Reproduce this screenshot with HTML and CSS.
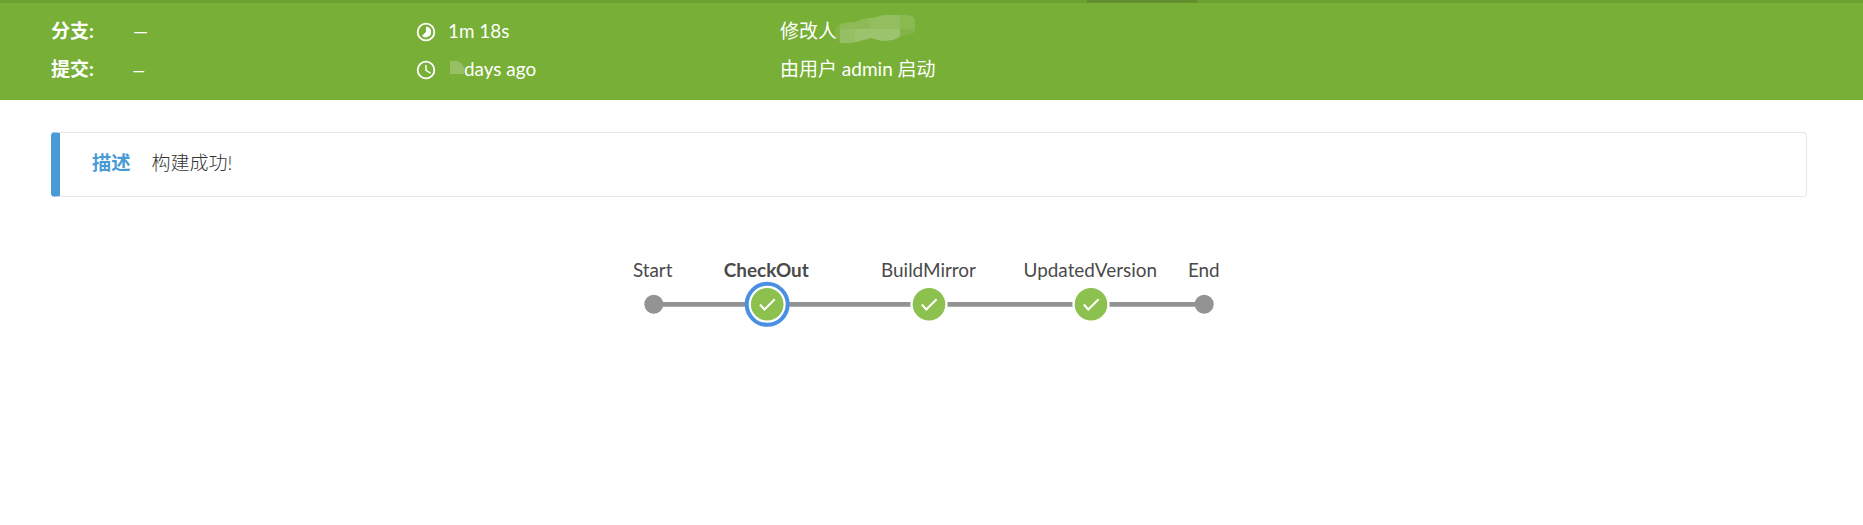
FILE: index.html
```html
<!DOCTYPE html>
<html lang="zh-CN">
<head>
<meta charset="utf-8">
<title>Pipeline</title>
<link rel="stylesheet" href="styles.css">
</head>
<body>
<header class="run-header">
  <div class="tab-strip"><span class="tab-active"></span></div>
  <div class="run-details">
    <div class="detail ref"><b class="label">分支:</b><span class="dash">—</span></div>
    <div class="detail time">
      <svg class="icon" viewBox="0 0 24 24"><circle cx="12" cy="12" r="10" fill="none" stroke="#fff" stroke-width="2.2"/><path fill="#fff" d="M12 5.5a6.5 6.5 0 1 1-4.8 11L12 12z"/></svg>
      <span class="latin">1m 18s</span>
    </div>
    <div class="detail"><span>修改人</span>
      <svg class="mask-name" width="82" height="30" viewBox="0 0 82 30">
        <defs><clipPath id="name"><path d="M1 17Q2 9 11 8L22 7Q30 3 39 3L49 0H74Q81 1 81 7V16Q80 20 68 21L59 25L48 26L37 23L26 26L17 28H8Q2 26 1 20z"/></clipPath></defs>
        <g clip-path="url(#name)"><path fill="#82b447" d="M0 0H82V30H0z"/><path fill="#93be5f" d="M6 0H66V14H6z"/><path fill="#8ebb58" d="M6 0H36V14H6z"/><path fill="#9cc36d" d="M6 14H66V30H6z"/><path fill="#95bf63" d="M6 14H21V30H6z"/><path fill="#8ab950" d="M66 0H82V14H66z"/></g>
      </svg>
    </div>
    <div class="detail ref"><b class="label">提交:</b><span class="dash short">–</span></div>
    <div class="detail time">
      <svg class="icon" viewBox="0 0 24 24"><circle cx="12" cy="12" r="10" fill="none" stroke="#fff" stroke-width="2.2"/><path fill="none" stroke="#fff" stroke-width="1.8" d="M12 6V12.5L17.3 15.8"/></svg>
      <svg class="mask-days" width="16" height="15" viewBox="0 0 16 15"><path fill="#97c065" d="M2 1H9Q14 2 16 8V14H2z"/></svg>
      <span class="latin">days ago</span>
    </div>
    <div class="detail"><span>由用户 admin 启动</span></div>
  </div>
</header>
<main class="content">
  <section class="description"><b class="description-title">描述</b><span>构建成功!</span></section>
  <svg class="pipeline" width="620" height="90" viewBox="620 250 620 90">
    <path class="track" d="M654 304.3H1204"/>
    <circle class="terminal" cx="653.8" cy="304.3" r="9.5"/>
    <circle class="terminal" cx="1204.2" cy="304.3" r="9.5"/>
    <g class="stage" transform="translate(767.2 304.3)"><circle class="selected" r="20.5"/><circle class="success" r="16.3"/><path class="check" d="M-7.2 .2L-2.7 5.2L7.6-5"/></g>
    <g class="stage" transform="translate(929 304.3)"><circle class="halo" r="18.6"/><circle class="success" r="16.3"/><path class="check" d="M-7.2 .2L-2.7 5.2L7.6-5"/></g>
    <g class="stage" transform="translate(1091 304.3)"><circle class="halo" r="18.6"/><circle class="success" r="16.3"/><path class="check" d="M-7.2 .2L-2.7 5.2L7.6-5"/></g>
    <text x="652.7" y="277">Start</text>
    <text class="current" x="766.3" y="277">CheckOut</text>
    <text x="928.5" y="277">BuildMirror</text>
    <text x="1090.3" y="277">UpdatedVersion</text>
    <text x="1203.8" y="277">End</text>
  </svg>
</main>
</body>
</html>
```
FILE: styles.css
```css
* { box-sizing: border-box; }
body {
  margin: 0;
  background: #fff;
  color: #4a4a4a;
  font: 400 19px/38px Lato, "Noto Sans CJK SC", sans-serif;
}
.run-header { height: 100px; background: #78af37; color: #fff; }
.tab-strip { height: 3px; padding-left: 1087px; background: #6da032; }
.tab-active { display: block; width: 110px; height: 3px; background: #628f2d; }
.run-details {
  display: grid;
  grid-template-columns: 365px 364px 1fr;
  grid-auto-rows: 38px;
  padding: 9px 0 0 51px;
}
.detail { display: flex; align-items: center; white-space: nowrap; }
.latin { font-size: 18.9px; }
.label { width: 82px; font-weight: 700; }
.dash { font-size: 19px; }
.short { margin: 2px 0 0 -2px; transform: scaleX(1.4); transform-origin: left; }
.icon { width: 20px; height: 20px; margin: 2px 12px 0 0; }
.mask-name { margin: -2px 0 0 -3px; }
.mask-days { margin: -3px 0 0; }
.content { display: flex; flex-direction: column; }
.description {
  display: flex;
  align-items: center;
  gap: 21px;
  height: 65px;
  margin: 32px 56px 0 51px;
  padding: 0 0 4px 32px;
  border: 1px solid #e6e7ed;
  border-left: 9px solid #4a9bd5;
  border-radius: 4px;
  color: #333;
  font-weight: 300;
}
.description-title { color: #4a9bd5; font-size: 19.3px; font-weight: 700; }
.pipeline { display: block; margin: 53px 0 0 620px; }
.pipeline text { fill: #4a4a4a; font: 400 18.9px Lato, sans-serif; text-anchor: middle; }
.pipeline .current { font-weight: 700; }
.track { stroke: #949393; stroke-width: 4.67; }
.terminal { fill: #949393; }
.success { fill: #8cc04f; }
.halo { fill: #fff; }
.selected { fill: #fff; stroke: #4a90e2; stroke-width: 4; }
.check { fill: none; stroke: #fff; stroke-width: 2; }
```
